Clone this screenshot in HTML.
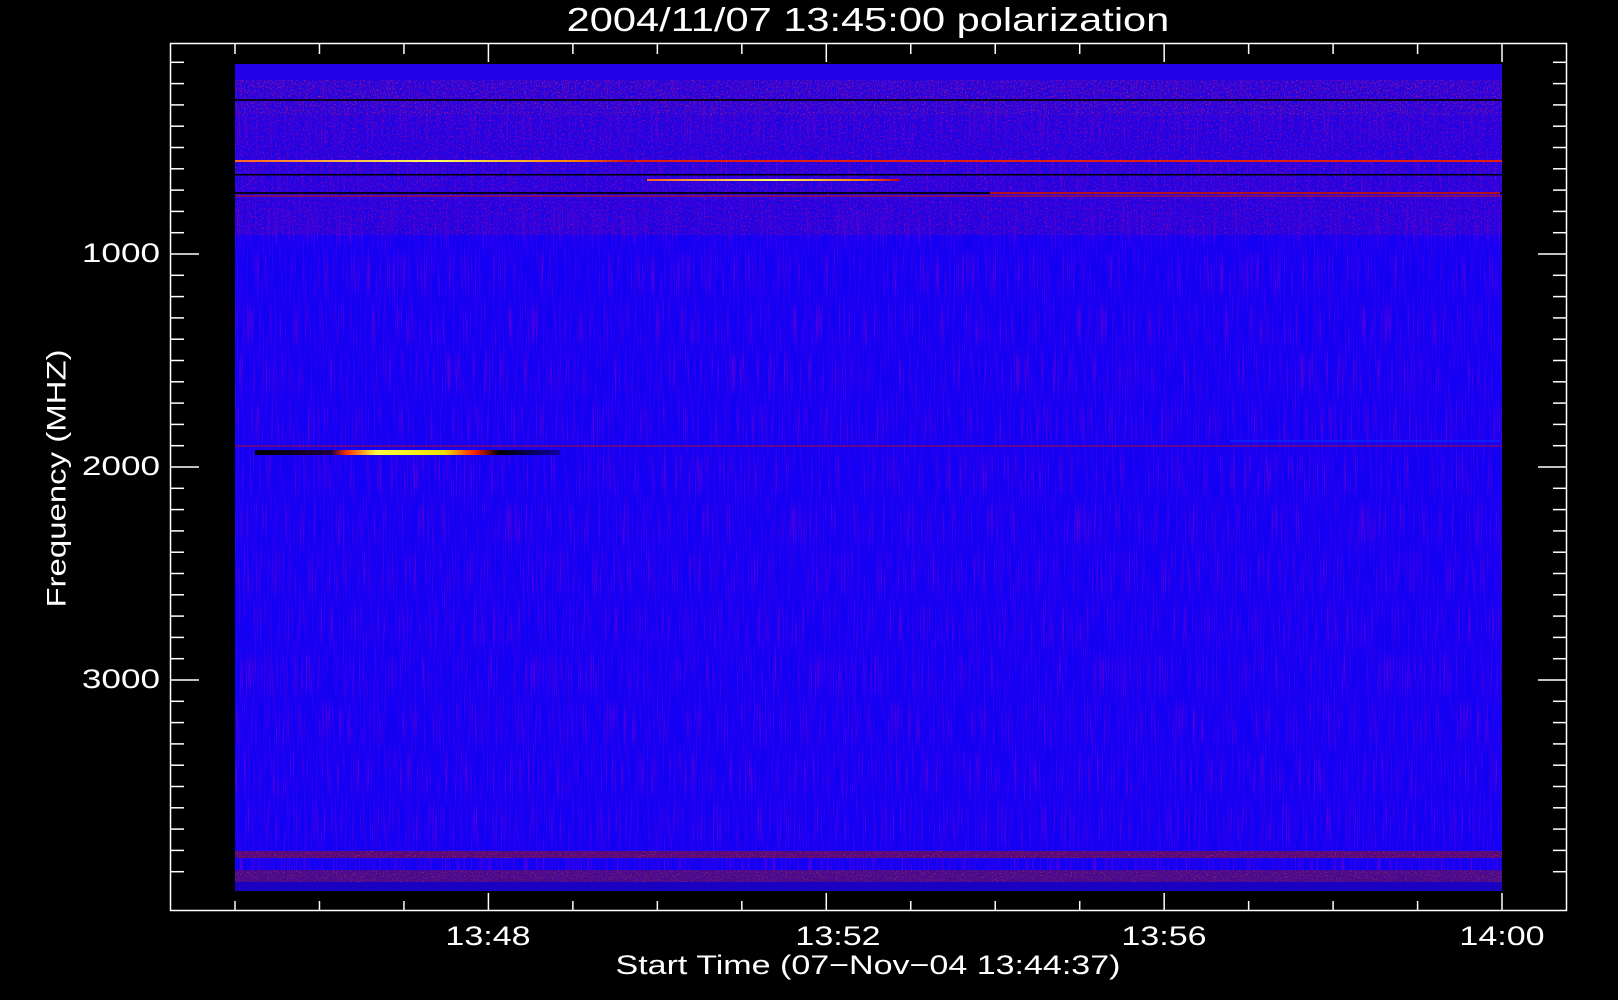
<!DOCTYPE html>
<html><head><meta charset="utf-8"><style>
html,body{margin:0;padding:0;background:#000;}
body{width:1618px;height:1000px;position:relative;overflow:hidden;font-family:"Liberation Sans",sans-serif;color:#fff;}
.t{position:absolute;white-space:nowrap;font-weight:normal;}
.c{transform:scaleX(1.26);transform-origin:center;}
.r{transform:scaleX(1.3);transform-origin:right;}
</style></head><body>
<svg width="1618" height="1000" style="position:absolute;left:0;top:0">
<defs>
<filter id="n1" x="0" y="0" width="100%" height="100%">
<feTurbulence type="fractalNoise" baseFrequency="0.9 0.02" numOctaves="2" seed="3"/>
<feColorMatrix type="matrix" values="0 0 0 0 0.35  0 0 0 0 0  0 0 0 0 0.55  0 0 0 2.2 -1.1"/>
</filter>
<filter id="n2" x="0" y="0" width="100%" height="100%">
<feTurbulence type="fractalNoise" baseFrequency="0.7 0.5" numOctaves="2" seed="7"/>
<feColorMatrix type="matrix" values="0 0 0 0 0.45  0 0 0 0 0  0 0 0 0 0.35  0 0 0 3 -1.5"/>
</filter>
<filter id="n3" x="0" y="0" width="100%" height="100%">
<feTurbulence type="fractalNoise" baseFrequency="0.9 0.9" numOctaves="1" seed="11"/>
<feColorMatrix type="matrix" values="0 0 0 0 0.9  0 0 0 0 0.1  0 0 0 0 0  0 0 0 4 -2.4"/>
</filter>
<linearGradient id="yl" x1="0" x2="1">
<stop offset="0" stop-color="#ff6020"/><stop offset="0.5" stop-color="#ffff60"/><stop offset="0.85" stop-color="#ff8000"/><stop offset="1" stop-color="#c00020"/></linearGradient>
<linearGradient id="bu" x1="0" x2="1">
<stop offset="0" stop-color="#000"/><stop offset="0.25" stop-color="#200040"/><stop offset="0.3" stop-color="#ff3000"/><stop offset="0.4" stop-color="#ffff40"/><stop offset="0.62" stop-color="#f0e000"/><stop offset="0.72" stop-color="#ff2000"/><stop offset="0.8" stop-color="#000"/><stop offset="1" stop-color="#1000a0"/></linearGradient>
</defs>
<rect x="235" y="64" width="1267" height="827" fill="#1200f4"/>
<rect x="235" y="64" width="1267" height="827" filter="url(#n1)" opacity="0.75"/>
<rect x="235" y="80" width="1267" height="155" fill="#2a08c8" opacity="0.35"/>
<rect x="235" y="80" width="1267" height="155" filter="url(#n2)" opacity="0.8"/>
<rect x="235" y="80" width="1267" height="35" filter="url(#n3)"/>
<rect x="235" y="64" width="1267" height="16" fill="#2200e8"/>
<rect x="235" y="99" width="1267" height="2" fill="#000" opacity="0.8"/>
<rect x="235" y="160" width="1267" height="2" fill="#e02010"/>
<rect x="235" y="160" width="400" height="2" fill="url(#yl)"/>
<rect x="235" y="174" width="1267" height="1.5" fill="#000"/>
<rect x="647" y="179" width="253" height="2" fill="url(#yl)"/>
<rect x="235" y="192" width="1267" height="2" fill="#000" opacity="0.85"/>
<rect x="235" y="195" width="1267" height="2" fill="#a01040" opacity="0.7"/>
<rect x="990" y="192" width="510" height="2" fill="#b01020"/>
<rect x="235" y="445" width="1267" height="2" fill="#a01030" opacity="0.5"/>
<rect x="1230" y="440" width="270" height="2" fill="#0a30ff" opacity="0.6"/>
<rect x="255" y="450" width="305" height="5" fill="url(#bu)"/>
<rect x="235" y="851" width="1267" height="7" fill="#5a0880"/>
<rect x="235" y="851" width="1267" height="7" filter="url(#n3)"/>
<rect x="235" y="870" width="1267" height="12" fill="#4a0a90"/>
<rect x="235" y="870" width="1267" height="12" filter="url(#n3)"/>
<rect x="235" y="882" width="1267" height="9" fill="#1a00c0"/>
<rect x="170.5" y="43.5" width="1396" height="867" fill="none" stroke="#fff" stroke-width="1.5"/>
<g stroke="#fff" stroke-width="1.5" id="ticks"></g>
</svg>
<div class="t c" style="left:0;width:1736px;top:1px;text-align:center;font-size:33px;">2004/11/07 13:45:00 polarization</div>
<div class="t r" style="left:60px;width:100px;top:238px;text-align:right;font-size:27px;">1000</div>
<div class="t r" style="left:60px;width:100px;top:451px;text-align:right;font-size:27px;">2000</div>
<div class="t r" style="left:60px;width:100px;top:664px;text-align:right;font-size:27px;">3000</div>
<div class="t c" style="left:438px;width:100px;top:921px;text-align:center;font-size:27px;">13:48</div>
<div class="t c" style="left:788px;width:100px;top:921px;text-align:center;font-size:27px;">13:52</div>
<div class="t c" style="left:1114px;width:100px;top:921px;text-align:center;font-size:27px;">13:56</div>
<div class="t c" style="left:1452px;width:100px;top:921px;text-align:center;font-size:27px;">14:00</div>
<div class="t c" style="left:0;width:1736px;top:950px;text-align:center;font-size:27px;">Start Time (07−Nov−04 13:44:37)</div>
<div class="t" style="left:-93px;width:300px;top:463px;text-align:center;font-size:27px;transform:rotate(-90deg) scaleX(1.22);">Frequency (MHZ)</div>
<script>
var g=document.getElementById('ticks'),s='';
for(var i=1;i<=39;i++){var y=254+(i-10)*21.3;var L=(i%10==0)?29:14;
s+='<line x1="170" y1="'+y+'" x2="'+(170+L)+'" y2="'+y+'"/>';
s+='<line x1="1567" y1="'+y+'" x2="'+(1567-L)+'" y2="'+y+'"/>';}
for(var k=0;k<=15;k++){var x=235+k*84.47;var M=((k+1)%4==0)||k==15;var L2=M?18:10;
if(k==15)x=1502;
s+='<line x1="'+x+'" y1="44" x2="'+x+'" y2="'+(44+L2)+'"/>';
s+='<line x1="'+x+'" y1="911" x2="'+x+'" y2="'+(911-L2)+'"/>';}
g.innerHTML=s;
</script>
</body></html>
